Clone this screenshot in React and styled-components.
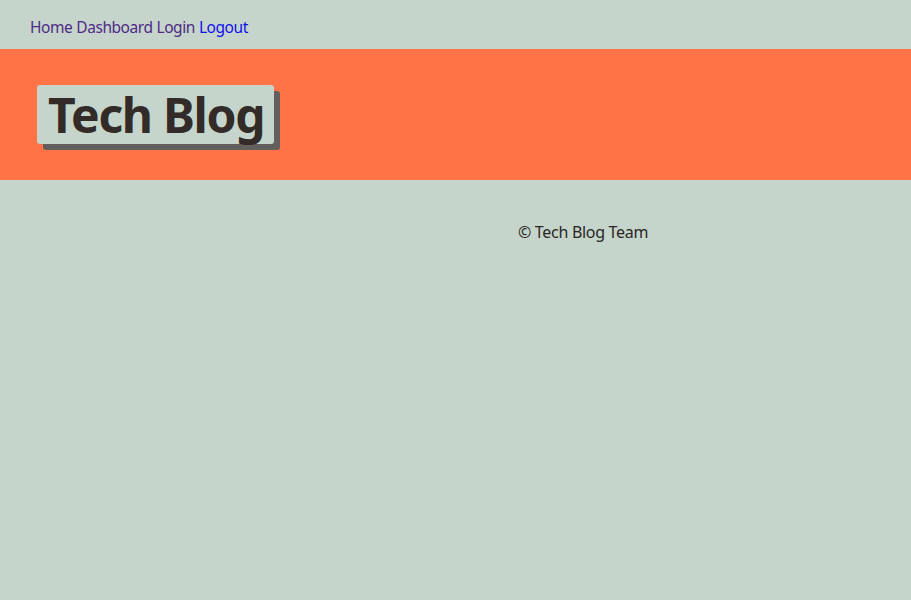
import React from "react";
import styled, { createGlobalStyle } from "styled-components";

const GlobalStyle = createGlobalStyle`
  html, body {
    margin: 0;
    padding: 0;
    background: #c5d5cb;
    font-family: "Noto Sans", "Open Sans", sans-serif;
  }
`;

export default function App() {
  return (
    <>
      <GlobalStyle />
      <Page>
        <Nav>
          <NavLink href="#home" visited>Home</NavLink>
          <NavLink href="#dashboard" visited>Dashboard</NavLink>
          <NavLink href="#login" visited>Login</NavLink>
          <NavLink href="#logout">Logout</NavLink>
        </Nav>
        <Header>
          <Title>Tech Blog</Title>
        </Header>
        <Content>
          <Main />
          <Footer>© Tech Blog Team</Footer>
        </Content>
      </Page>
    </>
  );
}

const Page = styled.div`
  min-height: 100vh;
  background: #c5d5cb;
`;

const Nav = styled.nav`
  height: 49px;
  display: flex;
  align-items: center;
  gap: 4px;
  padding: 5px 30px 0;
  box-sizing: border-box;
  font-size: 15.5px;
`;

const NavLink = styled.a`
  color: ${(p) => (p.visited ? "#4f2a86" : "#1010ee")};
  text-decoration: none;
  letter-spacing: -0.45px;
`;

const Header = styled.header`
  height: 131px;
  background: #ff7346;
  display: flex;
  align-items: center;
  padding: 0 37px;
  box-sizing: border-box;
`;

const Title = styled.h1`
  margin: 0;
  height: 59px;
  display: flex;
  align-items: center;
  padding: 0 10px 0 11px;
  background: #c5d5cb;
  color: #322b28;
  border-radius: 3px;
  box-shadow: 6px 6px 0 #625f5c;
  font-size: 48px;
  font-weight: 700;
  letter-spacing: -1.3px;
`;

const Content = styled.div`
  display: grid;
  grid-template-columns: 518px 1fr;
  padding-top: 41px;
`;

const Main = styled.main``;

const Footer = styled.footer`
  font-size: 16px;
  color: #2a2623;
  letter-spacing: -0.3px;
`;
